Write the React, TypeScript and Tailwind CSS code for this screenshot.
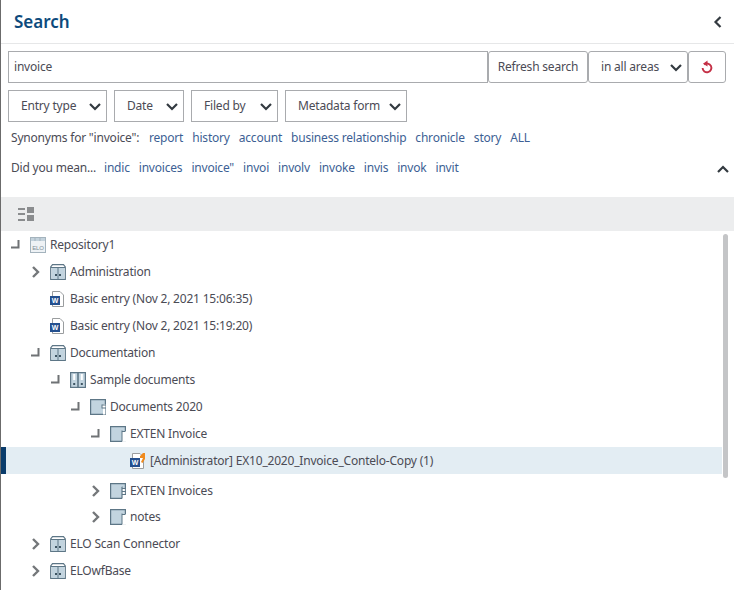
import React from "react";

const font = { };

function Chevron({ cls = "" }: { cls?: string }) {
  return (
    <svg width="14" height="9" viewBox="0 0 14 9" className={cls}>
      <path d="M2 2 L7 7 L12 2" fill="none" stroke="#333a40" strokeWidth="2.2" />
    </svg>
  );
}

function Select({ label, w, pl }: { label: string; w: string; pl: string }) {
  return (
    <div className={`flex h-8 items-center justify-between border border-[#a9abae] bg-white pr-[4px] ${w} ${pl}`}>
      <span>{label}</span>
      <Chevron />
    </div>
  );
}

function Elbow() {
  return (
    <svg width="20" height="12" viewBox="0 0 20 12">
      <path d="M1 8.5 H8.5 V1" fill="none" stroke="#6f7275" strokeWidth="2" />
    </svg>
  );
}

function Arrow() {
  return (
    <svg width="20" height="12" viewBox="0 0 20 12">
      <path d="M3 1 L8 6 L3 11" fill="none" stroke="#74777a" strokeWidth="2.4" />
    </svg>
  );
}

function RepoIcon() {
  return (
    <svg width="16" height="16" viewBox="0 0 16 16">
      <rect x="0.5" y="0.5" width="15" height="15" fill="#eef2f5" stroke="#a4b3bd" />
      <rect x="1" y="1" width="14" height="3" fill="#c3d2dc" />
      <path d="M5 1v3M10 1v3" stroke="#a4b3bd" />
      <text x="8" y="12.5" fontSize="6" textAnchor="middle" fill="#7d8d98" fontFamily="Liberation Sans">ELO</text>
    </svg>
  );
}

function Cabinet() {
  return (
    <svg width="16" height="16" viewBox="0 0 16 16">
      <path d="M0.7 15.3 V3 L2.5 0.7 H13.5 L15.3 3 V15.3 Z" fill="#fff" stroke="#5d7686" strokeWidth="1.2" />
      <rect x="1.5" y="4" width="13" height="11" fill="#c2d4df" />
      <path d="M8 4 V15" stroke="#5d7686" />
      <path d="M1 3.5 H15" stroke="#5d7686" />
      <rect x="5" y="10" width="2" height="2" fill="#3e5563" />
      <rect x="9" y="10" width="2" height="2" fill="#3e5563" />
    </svg>
  );
}

function Binder() {
  return (
    <svg width="16" height="16" viewBox="0 0 16 16">
      <rect x="0.6" y="0.6" width="14.8" height="14.8" fill="#c2d4df" stroke="#5d7686" strokeWidth="1.2" />
      <path d="M8 0.6 V15.4" stroke="#5d7686" strokeWidth="1.6" />
      <rect x="3.2" y="2" width="2" height="6" fill="#fff" />
      <rect x="10.8" y="2" width="2" height="6" fill="#fff" />
      <rect x="3.2" y="11" width="2" height="2" fill="#3e5563" />
      <rect x="10.8" y="11" width="2" height="2" fill="#3e5563" />
    </svg>
  );
}

function Folder({ kind }: { kind: "a" | "b" | "c" }) {
  return (
    <svg width="16" height="16" viewBox="0 0 16 16">
      <path d="M0.6 15.4 V0.6 H15.4 V15.4 Z" fill="#c2d4df" stroke="#5d7686" strokeWidth="1.2" />
      {kind === "a" && <path d="M13 5 H15.4 V15.4 H13 V8 H16" fill="#fff" />}
      {kind === "a" && <rect x="12" y="6" width="4" height="3" fill="#fff" stroke="#5d7686" />}
      {kind === "b" && <path d="M12 5 V15.9 H16 V5 Z" fill="#fff" />}
      {kind === "b" && <path d="M12 5.5 H15.5" stroke="#5d7686" />}
      {kind === "b" && <path d="M12 4.5 V15.4" stroke="#5d7686" />}
      {kind === "c" && <path d="M12 5 V16 H16 V5 Z" fill="#fff" />}
      {kind === "c" && <path d="M11.8 4 H12 V15.4" stroke="#5d7686" strokeWidth="1.2" fill="none" />}
      {kind === "c" && <path d="M12 5.5 H16 M12 8.5 H16 M12 11.5 H16 M15.4 5 V12" stroke="#5d7686" fill="none" />}
    </svg>
  );
}

function WordDoc({ edit }: { edit?: boolean }) {
  return (
    <svg width="16" height="16" viewBox="0 0 16 16">
      <path d="M2.5 0.5 H10 L13.5 4 V15.5 H2.5 Z" fill="#fff" stroke="#9a9d9f" />
      <rect x="0" y="5" width="10" height="9" fill="#24508f" />
      <text x="5" y="12.2" fontSize="7" fontWeight="700" textAnchor="middle" fill="#fff" fontFamily="Liberation Sans">W</text>
      {edit && <path d="M10 3 L13 0 H15 V6 L12.5 10 L11 9 L13 5 H10 Z" fill="#f08a1d" />}
    </svg>
  );
}

type Row = { pad: string; tog?: "e" | "a"; icon: React.ReactNode; text: string; sel?: boolean; h?: string };

const rows: Row[] = [
  { pad: "pl-[9px]", tog: "e", icon: <RepoIcon />, text: "Repository1" },
  { pad: "pl-[29px]", tog: "a", icon: <Cabinet />, text: "Administration" },
  { pad: "pl-[29px]", icon: <WordDoc />, text: "Basic entry (Nov 2, 2021 15:06:35)" },
  { pad: "pl-[29px]", icon: <WordDoc />, text: "Basic entry (Nov 2, 2021 15:19:20)" },
  { pad: "pl-[29px]", tog: "e", icon: <Cabinet />, text: "Documentation" },
  { pad: "pl-[49px]", tog: "e", icon: <Binder />, text: "Sample documents" },
  { pad: "pl-[69px]", tog: "e", icon: <Folder kind="a" />, text: "Documents 2020" },
  { pad: "pl-[89px]", tog: "e", icon: <Folder kind="b" />, text: "EXTEN Invoice" },
  { pad: "pl-[109px]", icon: <WordDoc edit />, text: "[Administrator] EX10_2020_Invoice_Contelo-Copy (1)", sel: true },
  { pad: "pl-[89px]", tog: "a", icon: <Folder kind="c" />, text: "EXTEN Invoices", h: "h-[30px] pt-[3px]" },
  { pad: "pl-[89px]", tog: "a", icon: <Folder kind="b" />, text: "notes", h: "h-[26px]" },
  { pad: "pl-[29px]", tog: "a", icon: <Cabinet />, text: "ELO Scan Connector" },
  { pad: "pl-[29px]", tog: "a", icon: <Cabinet />, text: "ELOwfBase" },
];

const synonyms = ["report", "history", "account", "business relationship", "chronicle", "story", "ALL"];
const means = ["indic", "invoices", 'invoice"', "invoi", "involv", "invoke", "invis", "invok", "invit"];

export default function App() {
  return (
    <div className="relative h-[590px] w-[734px] overflow-hidden border-l border-[#6b6b6b] bg-white font-['Noto_Sans',sans-serif] text-[12px] tracking-[-0.2px] text-[#4b4b55]">
      <div className="flex h-11 items-center justify-between border-b border-[#e6e7e8] pl-[13px] pr-[11px]">
        <h1 className="font-['Noto_Sans',sans-serif] text-[17px] font-semibold tracking-normal text-[#0d4a7c]">Search</h1>
        <svg width="10" height="14" viewBox="0 0 10 14">
          <path d="M7.5 2 L2.5 7 L7.5 12" fill="none" stroke="#333a40" strokeWidth="2.2" />
        </svg>
      </div>

      <div className="flex h-8 pl-[7px] pt-0 mt-[7px]">
        <div className="flex w-[480px] items-center border border-[#a9abae] pl-[5px] text-[#4b4b55]">invoice</div>
        <div className="flex w-[100px] items-center justify-center rounded-[3px] border border-[#a9abae]">Refresh search</div>
        <div className="flex w-[100px] items-center justify-between rounded-[3px] border border-[#a9abae] pl-[12px] pr-[4px]">
          <span>in all areas</span>
          <Chevron />
        </div>
        <div className="flex w-[38px] items-center justify-center rounded-[3px] border border-[#a9abae]">
          <svg width="12" height="14" viewBox="0 0 12 14">
            <path d="M3.2 4.5 A4.4 4.4 0 1 1 1.6 8" fill="none" stroke="#c42f45" strokeWidth="1.9" />
            <path d="M6.5 0.5 L2 3.8 L6.5 6.6 Z" fill="#c42f45" />
          </svg>
        </div>
      </div>

      <div className="mt-[7px] flex gap-[7px] pl-[7px]">
        <Select label="Entry type" w="w-[99px]" pl="pl-[12px]" />
        <Select label="Date" w="w-[70px]" pl="pl-[12px]" />
        <Select label="Filed by" w="w-[87px]" pl="pl-[12px]" />
        <Select label="Metadata form" w="w-[122px]" pl="pl-[12px]" />
      </div>

      <div className="mt-[7px] flex h-[18px] items-center pl-[10px]">
        <span className="w-[138px]">Synonyms for "invoice":</span>
        <div className="flex gap-[9px] text-[#3d5f94]">
          {synonyms.map((s) => (
            <span key={s}>{s}</span>
          ))}
        </div>
      </div>

      <div className="relative mt-3 flex h-[18px] items-center pl-[10px]">
        <span className="w-[93px]">Did you mean...</span>
        <div className="flex gap-[9px] text-[#3d5f94]">
          {means.map((s) => (
            <span key={s}>{s}</span>
          ))}
        </div>
        <svg width="14" height="9" viewBox="0 0 14 9" className="absolute left-[715px] top-[6px]">
          <path d="M2 7 L7 2 L12 7" fill="none" stroke="#333a40" strokeWidth="2.2" />
        </svg>
      </div>

      <div className="mt-[20px] flex h-[34px] items-center bg-[#ecedee] pl-[17px]">
        <svg width="16" height="15" viewBox="0 0 16 15">
          <path d="M0 1h7v2H0zM0 6h7v2H0zM0 12h7v2H0z" fill="#8a8c8e" />
          <rect x="9" y="0" width="7" height="6" fill="#8a8c8e" />
          <rect x="9" y="8" width="7" height="6" fill="#8a8c8e" />
        </svg>
      </div>

      <div className="pt-[-0px]">
        {rows.map((r) => (
          <div
            key={r.text}
            className={`relative flex items-center ${r.h ?? "h-[27px]"} ${r.pad} ${r.sel ? "mr-[12px] bg-[#e3edf3]" : ""}`}
          >
            {r.sel && <div className="absolute bottom-0 left-0 top-0 w-[5px] bg-[#0a3c6b]" />}
            <div className="flex w-[20px] shrink-0 items-center">
              {r.tog === "e" ? <Elbow /> : r.tog === "a" ? <Arrow /> : null}
            </div>
            <div className="flex w-[20px] shrink-0 items-center">{r.icon}</div>
            <span>{r.text}</span>
          </div>
        ))}
      </div>

      <div className="absolute left-[722px] top-[234px] h-[244px] w-[5px] rounded-full bg-[#c4c5c7]" />
    </div>
  );
}
